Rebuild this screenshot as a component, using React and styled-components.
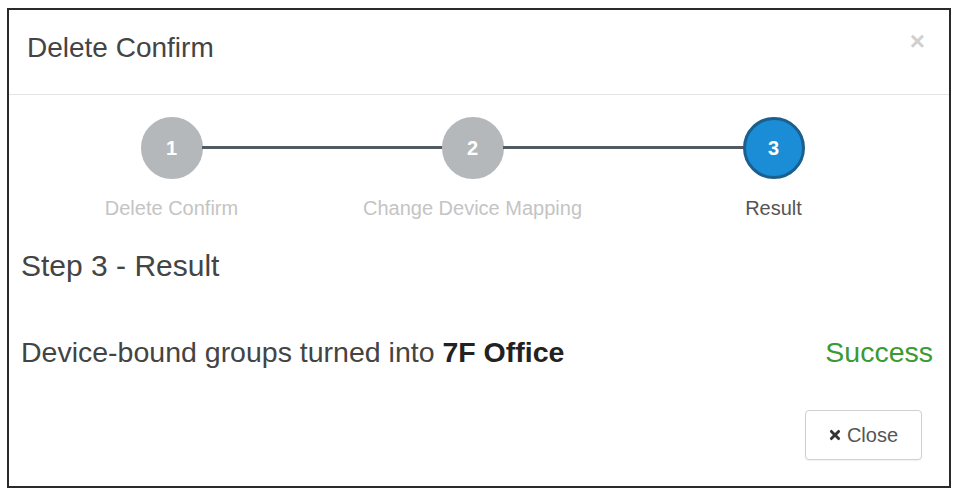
import React from "react";
import styled, { createGlobalStyle } from "styled-components";

const GlobalStyle = createGlobalStyle`
  body {
    margin: 0;
    background: #fff;
    font-family: "Liberation Sans", Arial, sans-serif;
    color: #444;
  }
`;

const steps = [
  { num: 1, label: "Delete Confirm" },
  { num: 2, label: "Change Device Mapping" },
  { num: 3, label: "Result" },
];

const current = 3;

function App() {
  return (
    <>
      <GlobalStyle />
      <Modal>
        <Header>
          <Title>Delete Confirm</Title>
          <HeaderClose aria-label="close">×</HeaderClose>
        </Header>
        <Body>
          <Steps>
            {steps.map((s, i) => (
              <Step key={s.num} $last={i === steps.length - 1}>
                <Circle $active={s.num === current}>{s.num}</Circle>
                <StepLabel $active={s.num === current}>{s.label}</StepLabel>
              </Step>
            ))}
          </Steps>
          <StepTitle>Step 3 - Result</StepTitle>
          <ResultRow>
            <span>
              Device-bound groups turned into <strong>7F Office</strong>
            </span>
            <Status>Success</Status>
          </ResultRow>
          <Footer>
            <CloseButton>
              <CloseIcon viewBox="0 0 10 10">
                <path d="M2 2 L8 8 M8 2 L2 8" />
              </CloseIcon>
              Close
            </CloseButton>
          </Footer>
        </Body>
      </Modal>
    </>
  );
}

export default App;

const Modal = styled.div`
  box-sizing: border-box;
  width: 944px;
  height: 480px;
  margin: 8px 0 0 7px;
  border: 2px solid #2a2a2a;
  background: #fff;
  display: flex;
  flex-direction: column;
`;

const Header = styled.div`
  height: 84px;
  flex: none;
  display: flex;
  align-items: center;
  justify-content: space-between;
  padding: 0 24px 0 18px;
  border-bottom: 1px solid #e3e3e3;
`;

const Title = styled.h4`
  margin: -8px 0 0;
  font-size: 28px;
  font-weight: normal;
  color: #444;
  line-height: 1;
`;

const HeaderClose = styled.button`
  border: 0;
  background: none;
  padding: 0;
  font-family: "Liberation Sans", Arial, sans-serif;
  font-size: 26px;
  font-weight: bold;
  color: #d0d0d0;
  line-height: 1;
  margin-top: -22px;
  cursor: pointer;
`;

const Body = styled.div`
  flex: 1;
  padding: 0 16px 0 12px;
  display: flex;
  flex-direction: column;
`;

const Steps = styled.div`
  display: grid;
  grid-template-columns: repeat(3, 301px);
  margin-top: 22px;
`;

const Step = styled.div`
  position: relative;
  display: flex;
  flex-direction: column;
  align-items: center;

  &::after {
    content: "";
    display: ${(p) => (p.$last ? "none" : "block")};
    position: absolute;
    top: 29px;
    left: calc(50% + 30px);
    width: calc(100% - 60px);
    height: 3px;
    background: #525b63;
  }
`;

const Circle = styled.div`
  box-sizing: border-box;
  width: 62px;
  height: 62px;
  border-radius: 50%;
  display: flex;
  align-items: center;
  justify-content: center;
  font-size: 20px;
  font-weight: bold;
  color: #fff;
  background: ${(p) => (p.$active ? "#1b8dd6" : "#b5b8bb")};
  border: 3px solid ${(p) => (p.$active ? "#1b5f8e" : "#b5b8bb")};
`;

const StepLabel = styled.div`
  margin-top: 17px;
  font-size: 20px;
  line-height: 24px;
  color: ${(p) => (p.$active ? "#555" : "#c4c4c4")};
`;

const StepTitle = styled.div`
  margin-top: 28px;
  font-size: 30px;
  line-height: 36px;
  color: #444;
`;

const ResultRow = styled.div`
  margin-top: 51px;
  display: flex;
  justify-content: space-between;
  align-items: baseline;
  font-size: 28.5px;
  line-height: 34px;
  color: #444;

  strong {
    font-weight: bold;
    color: #222;
  }
`;

const Status = styled.span`
  color: #3a9a34;
`;

const Footer = styled.div`
  display: flex;
  justify-content: flex-end;
  margin-top: 41px;
  padding-right: 11px;
`;

const CloseButton = styled.button`
  box-sizing: border-box;
  width: 117px;
  height: 50px;
  display: flex;
  align-items: center;
  justify-content: center;
  gap: 6px;
  background: #fff;
  border: 1px solid #d0d0d0;
  border-radius: 4px;
  box-shadow: 0 1px 2px rgba(0, 0, 0, 0.06);
  font-family: "Liberation Sans", Arial, sans-serif;
  font-size: 20px;
  color: #555;
  cursor: pointer;
`;

const CloseIcon = styled.svg`
  width: 12px;
  height: 12px;
  stroke: #333;
  stroke-width: 2.4;
  stroke-linecap: round;
  fill: none;
`;
